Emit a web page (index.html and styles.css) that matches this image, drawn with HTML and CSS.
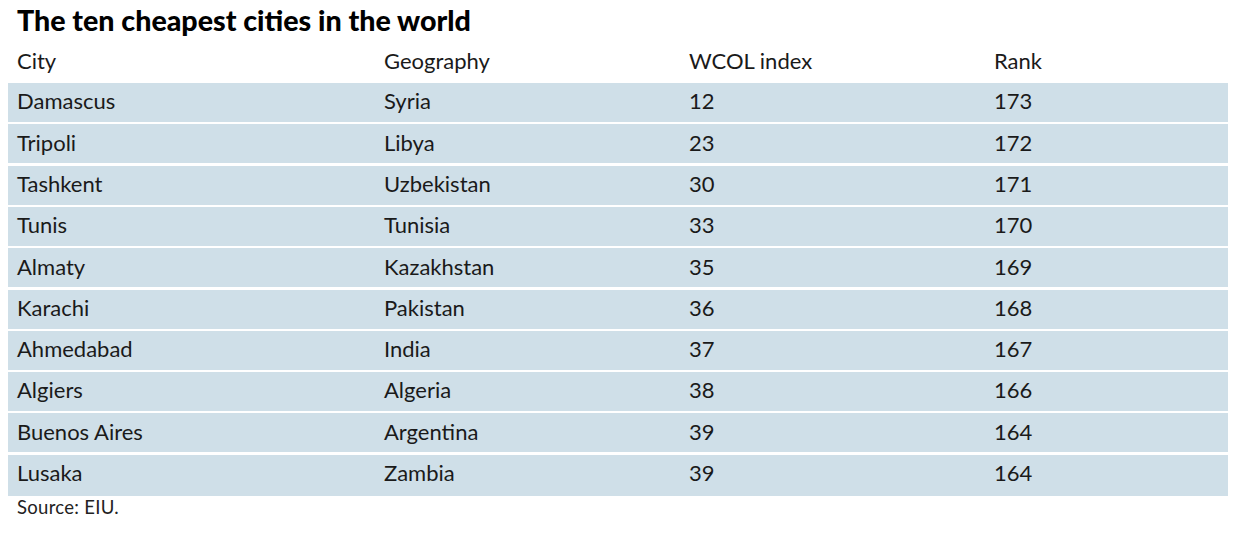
FILE: index.html
```html
<!DOCTYPE html>
<html>
<head>
<meta charset="utf-8">
<link rel="stylesheet" href="styles.css">
</head>
<body>
<div class="page">
  <h1 class="title">The ten cheapest cities in the world</h1>
  <div class="table">
    <div class="row head"><div>City</div><div>Geography</div><div>WCOL index</div><div>Rank</div></div>
    <div class="row"><div>Damascus</div><div>Syria</div><div>12</div><div>173</div></div>
    <div class="row"><div>Tripoli</div><div>Libya</div><div>23</div><div>172</div></div>
    <div class="row"><div>Tashkent</div><div>Uzbekistan</div><div>30</div><div>171</div></div>
    <div class="row"><div>Tunis</div><div>Tunisia</div><div>33</div><div>170</div></div>
    <div class="row"><div>Almaty</div><div>Kazakhstan</div><div>35</div><div>169</div></div>
    <div class="row"><div>Karachi</div><div>Pakistan</div><div>36</div><div>168</div></div>
    <div class="row"><div>Ahmedabad</div><div>India</div><div>37</div><div>167</div></div>
    <div class="row"><div>Algiers</div><div>Algeria</div><div>38</div><div>166</div></div>
    <div class="row"><div>Buenos Aires</div><div>Argentina</div><div>39</div><div>164</div></div>
    <div class="row last"><div>Lusaka</div><div>Zambia</div><div>39</div><div>164</div></div>
  </div>
  <p class="source">Source: EIU.</p>
</div>
</body>
</html>
```

FILE: styles.css
```css
html, body {
  margin: 0;
  padding: 0;
  background: #ffffff;
}
body {
  font-family: Lato, "Open Sans", sans-serif;
  color: #1a1a1a;
}
.page {
  padding: 6px 0 0 8px;
  width: 1220px;
}
.title {
  margin: 0;
  padding-left: 9px;
  font-size: 28.6px;
  line-height: 28px;
  font-weight: 900;
  color: #000;
  letter-spacing: 0;
}
.table {
  display: flex;
  flex-direction: column;
  gap: 2.3px;
  margin-top: 15.5px;
}
.row {
  display: grid;
  grid-template-columns: 367px 305px 305px 1fr;
  background: #cfdfe8;
  height: 39px;
  box-sizing: border-box;
  padding-top: 7.3px;
  font-size: 22px;
  line-height: 22px;
}
.row > div {
  padding-left: 9px;
}
.row.last {
  height: 41px;
}
.row.head {
  background: transparent;
  height: 33.6px;
  padding-top: 0;
  margin-bottom: -2.3px;
}
.source {
  margin: 2px 0 0;
  padding-left: 9px;
  font-size: 18.5px;
  line-height: 18px;
  letter-spacing: 0.3px;
  color: #222;
}
```
